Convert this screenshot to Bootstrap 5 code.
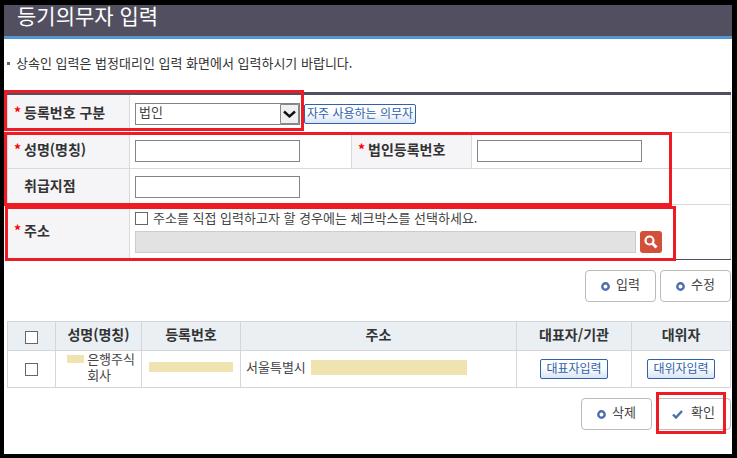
<!DOCTYPE html>
<html lang="ko">
<head>
<meta charset="utf-8">
<meta name="viewport" content="width=device-width, initial-scale=1">
<title>등기의무자 입력</title>
<link href="https://cdn.jsdelivr.net/npm/bootstrap@5.3.0/dist/css/bootstrap.min.css" rel="stylesheet">
<style>
body { background: #000; padding: 5px 5px 4px 4px; font-family: "Noto Sans CJK KR", sans-serif; font-size: 13px; line-height: 14px; color: #444; }
.window { min-height: calc(100vh - 9px); }
.title-bar { background: #514f60; border-bottom: 3px solid #5596d2; height: 34px; padding: 0 13px; }
.title-bar h1 { font-size: 21px; line-height: 20px; font-weight: 400; }
.notice { padding: 16px 3px 21px 3px; line-height: 16px; color: #333; }
.notice::before { content: ""; width: 3px; height: 3px; background: #666; margin-right: 6px; }
.content-area { padding: 0 1px 0 3px; }
.form-grid, .list-grid { table-layout: fixed; border-collapse: collapse; }
.form-grid { border: 1px solid #d9d9dd; }
.form-grid th, .form-grid td { height: 36px; border: 1px solid #d9d9dd; padding: 0 5px; }
.form-grid tr:first-child > * { height: 39px; border-top: 3px solid #514f60; }
.form-grid tr:last-child > * { border-bottom: 1px solid #514f60; }
.form-grid th { background: #f5f5f8; color: #333; font-size: 14px; line-height: 16px; padding: 0 0 4px 16px; }
.form-grid th.required { padding-left: 6px; }
.star { color: #f00; display: inline-block; width: 10px; line-height: 16px; }
.form-grid .address-row > * { height: 55px; }
.col-check { width: 48px; } .col-name { width: 86px; } .col-number { width: 99px; }
.col-agent { width: 115px; } .col-proxy { width: 99px; }
.col-label { width: 122px; } .col-field { width: 222px; } .col-label-b { width: 120px; }
.field { width: 165px; height: 22px; border: 1px solid #858585; background: #fff; padding: 0 3px; color: #444; border-radius: 0; }
.select-box select { appearance: none; line-height: 14px; padding-bottom: 4px; }
.select-box svg { right: 1px; top: 1px; pointer-events: none; }
.small-btn { height: 20px; font-size: 12px; line-height: 16px; color: #2f62ad; border: 1px solid #2f62ad; border-radius: 2px; background: linear-gradient(#fff 40%, #d9e4f3); padding: 0 5px 2px; white-space: nowrap; }
.small-btn.tight { padding: 0 2px 2px; }
.tick { appearance: none; width: 13px; height: 13px; border: 1px solid #666; background: #fff; margin: 0; flex: none; }
.tick:checked { background: #666; box-shadow: inset 0 0 0 2px #fff; }
.direct-line { height: 14px; margin-bottom: 5px; }
.direct-line label { line-height: 12px; }
.address-line { max-width: 527px; gap: 4px; }
.address-line input { border: 1px solid #ccc; background: #e2e2e2; width: auto; min-width: 0; }
.search-btn { width: 22px; height: 22px; background: #d2503a; border-radius: 3px; }
.action { height: 32px; min-width: 71px; border: 1px solid #bbb; border-radius: 4px; background: #fff; color: #444; gap: 6px; line-height: 16px; padding-bottom: 5px; }
.action svg { margin-top: 4px; }
.confirm { min-width: 75px; gap: 8px; }
.list-grid th, .list-grid td { border: 1px solid #d5d5da; padding: 0 5px; }
.list-grid th { background: #eaeff4; color: #333; font-size: 14px; line-height: 16px; height: 29px; padding-bottom: 4px; text-align: center; }
.list-grid th.check-cell { padding: 3px 0 0; }
.list-grid td { height: 37px; }
.list-grid .name-cell { padding: 0 6px 4px 0; line-height: 16px; }
.list-grid .number-cell, .list-grid .address-cell { padding-bottom: 4px; }
.masked { background: #efe3af; display: block; flex: none; }
.mask-name { width: 17px; height: 8px; margin-top: 4px; }
.mask-number { width: 84px; height: 10px; margin: 0 auto; }
.mask-address { width: 156px; height: 15px; }
.gap-3px { gap: 3px; } .gap-4px { gap: 4px; } .gap-5px { gap: 5px; }
.gap-list { margin: 10px 0 19px; }
.gap-end { margin-top: 10px; }
.highlight { border: 3px solid #ed1c24; pointer-events: none; }
.mark-type { left: -3px; top: -2px; width: 300px; height: 41px; }
.mark-name { left: -3px; top: 40px; width: 668px; height: 74px; }
.mark-address { left: -2px; top: 114px; width: 671px; height: 55px; }
.mark-confirm { left: 0; top: -6px; width: 70px; height: 42px; }
</style>
<script src="https://cdn.jsdelivr.net/npm/bootstrap@5.3.0/dist/js/bootstrap.bundle.min.js"></script>
</head>
<body>
<main class="window bg-white">
  <header class="title-bar"><h1 class="text-white m-0">등기의무자 입력</h1></header>
  <p class="notice d-flex align-items-center m-0">상속인 입력은 법정대리인 입력 화면에서 입력하시기 바랍니다.</p>
  <div class="content-area">
    <form class="position-relative">
      <table class="form-grid w-100">
        <colgroup><col class="col-label"><col class="col-field"><col class="col-label-b"><col></colgroup>
        <tbody>
          <tr>
            <th scope="row" class="required"><label for="kind"><span class="star">*</span>등록번호 구분</label></th>
            <td colspan="3">
              <div class="d-flex align-items-center gap-4px">
                <div class="select-box position-relative">
                  <select id="kind" class="field d-block"><option>법인</option><option>개인</option></select>
                  <svg class="position-absolute" width="19" height="20" viewBox="0 0 19 20" aria-hidden="true"><path d="M.5 .5h18v19h-18z" fill="#f0f0f0" stroke="#888"/><path d="M4 7.500l5.500 5 5.500-5" fill="none" stroke="#111" stroke-width="2.400"/></svg>
                </div>
                <button type="button" class="small-btn tight">자주 사용하는 의무자</button>
              </div>
            </td>
          </tr>
          <tr>
            <th scope="row" class="required"><label for="name"><span class="star">*</span>성명(명칭)</label></th>
            <td><input id="name" type="text" class="field d-block"></td>
            <th scope="row" class="required"><label for="number"><span class="star">*</span>법인등록번호</label></th>
            <td><input id="number" type="text" class="field d-block"></td>
          </tr>
          <tr>
            <th scope="row"><label for="branch">취급지점</label></th>
            <td colspan="3"><input id="branch" type="text" class="field d-block"></td>
          </tr>
          <tr class="address-row">
            <th scope="row" class="required"><label for="address"><span class="star">*</span>주소</label></th>
            <td colspan="3">
              <div class="direct-line d-flex align-items-start gap-5px">
                <input id="direct" type="checkbox" class="tick"><label for="direct">주소를 직접 입력하고자 할 경우에는 체크박스를 선택하세요.</label>
              </div>
              <div class="address-line d-flex">
                <input id="address" type="text" class="field flex-fill" readonly>
                <button type="button" class="search-btn border-0 p-0 d-flex align-items-center justify-content-center" aria-label="주소 검색">
                  <svg width="14" height="14" viewBox="0 0 14 14" fill="none" stroke="#fff"><circle cx="5.500" cy="5.500" r="4" stroke-width="2.200"/><path d="M8.500 8.500l4 4" stroke-width="3"/></svg>
                </button>
              </div>
            </td>
          </tr>
        </tbody>
      </table>
      <div class="highlight mark-type position-absolute"></div>
      <div class="highlight mark-name position-absolute"></div>
      <div class="highlight mark-address position-absolute"></div>
    </form>
    <div class="gap-list d-flex justify-content-end gap-4px">
      <button type="button" class="action d-flex align-items-center justify-content-center"><svg width="9" height="9" viewBox="0 0 9 9"><circle cx="4.500" cy="4.500" r="3.200" fill="none" stroke="#4c6cb0" stroke-width="2.400"/></svg>입력</button>
      <button type="button" class="action d-flex align-items-center justify-content-center"><svg width="9" height="9" viewBox="0 0 9 9"><circle cx="4.500" cy="4.500" r="3.200" fill="none" stroke="#4c6cb0" stroke-width="2.400"/></svg>수정</button>
    </div>
    <table class="list-grid w-100">
      <colgroup><col class="col-check"><col class="col-name"><col class="col-number"><col><col class="col-agent"><col class="col-proxy"></colgroup>
      <thead>
        <tr><th scope="col" class="check-cell"><input type="checkbox" class="tick d-block mx-auto" aria-label="전체 선택"></th><th scope="col">성명(명칭)</th><th scope="col">등록번호</th><th scope="col">주소</th><th scope="col">대표자/기관</th><th scope="col">대위자</th></tr>
      </thead>
      <tbody>
        <tr>
          <td><input type="checkbox" class="tick d-block mx-auto" aria-label="행 선택"></td>
          <td class="name-cell"><div class="d-flex justify-content-end gap-3px"><span class="masked mask-name"></span><span>은행주식<br>회사</span></div></td>
          <td class="number-cell"><span class="masked mask-number"></span></td>
          <td class="address-cell"><div class="d-flex align-items-center gap-5px">서울특별시<span class="masked mask-address"></span></div></td>
          <td class="text-center"><button type="button" class="small-btn">대표자입력</button></td>
          <td class="text-center"><button type="button" class="small-btn">대위자입력</button></td>
        </tr>
      </tbody>
    </table>
    <div class="gap-end d-flex justify-content-end gap-4px">
      <button type="button" class="action d-flex align-items-center justify-content-center"><svg width="9" height="9" viewBox="0 0 9 9"><circle cx="4.500" cy="4.500" r="3.200" fill="none" stroke="#4c6cb0" stroke-width="2.400"/></svg>삭제</button>
      <div class="position-relative">
        <button type="button" class="action confirm d-flex align-items-center justify-content-center"><svg width="11" height="9" viewBox="0 0 11 9"><path d="M1 4.500l3 3L10 1" fill="none" stroke="#4c6cb0" stroke-width="2.400"/></svg>확인</button>
        <div class="highlight mark-confirm position-absolute"></div>
      </div>
    </div>
  </div>
</main>
</body>
</html>
